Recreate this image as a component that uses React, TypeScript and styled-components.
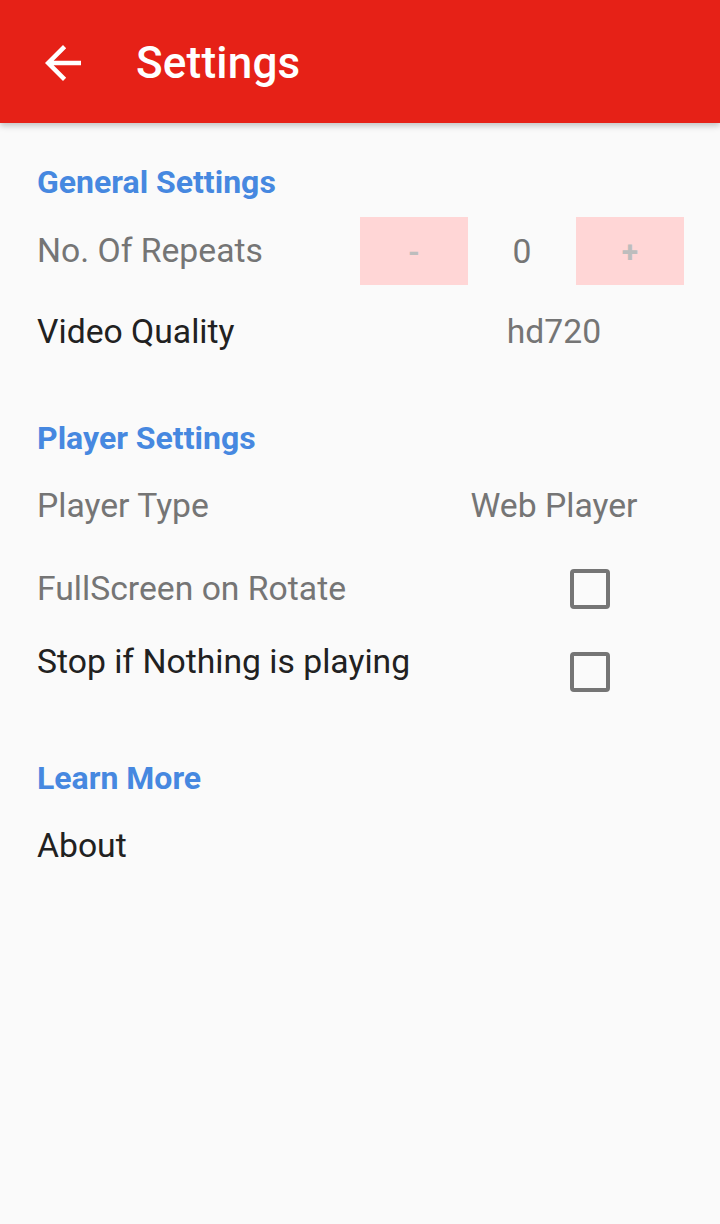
import React from "react";
import styled, { createGlobalStyle } from "styled-components";

const Global = createGlobalStyle`
  html, body { margin: 0; padding: 0; background: #fafafa; }
  body { font-family: Roboto, "Noto Sans", "Liberation Sans", sans-serif; }
  * { box-sizing: border-box; }
`;

const Page = styled.div`
  width: 720px;
  min-height: 1224px;
  background: #fafafa;
  display: flex;
  flex-direction: column;
`;

const AppBar = styled.header`
  height: 123px;
  background: #e62117;
  display: flex;
  align-items: center;
  padding-left: 36px;
  box-shadow: 0 3px 6px rgba(0, 0, 0, 0.22);
  position: relative;
  z-index: 1;
`;

const BackButton = styled.button`
  width: 54px;
  height: 54px;
  padding: 0;
  border: none;
  background: transparent;
  display: flex;
  align-items: center;
  justify-content: center;
  margin-top: 2px;
`;

const Title = styled.h1`
  margin: 3px 0 0 46px;
  color: #fff;
  font-size: 44px;
  font-weight: 500;
  letter-spacing: 0.2px;
`;

const Content = styled.main`
  display: flex;
  flex-direction: column;
  padding: 35px 36px 0 37px;
`;

const SectionTitle = styled.h2<{ $gap?: number }>`
  margin: ${(p) => p.$gap ?? 0}px 0 0 0;
  height: 48px;
  display: flex;
  align-items: center;
  color: #4688e0;
  font-size: 32px;
  font-weight: 700;
`;

const Row = styled.div<{ $h: number; $top?: boolean }>`
  height: ${(p) => p.$h}px;
  display: flex;
  align-items: ${(p) => (p.$top ? "flex-start" : "center")};
`;

const Label = styled.span<{ $dark?: boolean; $offset?: number }>`
  flex: 1;
  font-size: 33.7px;
  line-height: 40px;
  color: ${(p) => (p.$dark ? "#212121" : "#757575")};
  margin-top: ${(p) => p.$offset ?? 0}px;
`;

const Value = styled.span<{ $w: number }>`
  width: ${(p) => p.$w}px;
  text-align: center;
  font-size: 33.7px;
  line-height: 40px;
  color: #757575;
`;

const Stepper = styled.div`
  display: flex;
  align-items: center;
`;

const StepButton = styled.button`
  width: 108px;
  height: 68px;
  border: none;
  padding: 0;
  background: #ffd6d6;
  color: #bdbdbd;
  font-family: inherit;
  font-size: 30px;
  font-weight: 700;
  display: flex;
  align-items: center;
  justify-content: center;
`;

const Count = styled.span`
  width: 108px;
  text-align: center;
  font-size: 33.7px;
  color: #757575;
`;

const CheckCell = styled.div<{ $offset?: number }>`
  width: 188px;
  display: flex;
  justify-content: center;
  margin-top: ${(p) => p.$offset ?? 0}px;
`;

const Checkbox = styled.span`
  width: 40px;
  height: 40px;
  border: 4px solid #757575;
  border-radius: 4px;
  display: block;
`;

const ArrowBack = () => (
  <svg width="54" height="54" viewBox="0 0 24 24" fill="#fff">
    <path d="M20 11H7.83l5.59-5.59L12 4l-8 8 8 8 1.41-1.41L7.83 13H20v-2z" />
  </svg>
);

export default function App() {
  return (
    <Page>
      <Global />
      <AppBar>
        <BackButton aria-label="Back">
          <ArrowBack />
        </BackButton>
        <Title>Settings</Title>
      </AppBar>
      <Content>
        <SectionTitle>General Settings</SectionTitle>
        <Row $h={90}>
          <Label>No. Of Repeats</Label>
          <Stepper>
            <StepButton>-</StepButton>
            <Count>0</Count>
            <StepButton>+</StepButton>
          </Stepper>
        </Row>
        <Row $h={72}>
          <Label $dark>Video Quality</Label>
          <Value $w={260}>hd720</Value>
        </Row>

        <SectionTitle $gap={46}>Player Settings</SectionTitle>
        <Row $h={88}>
          <Label>Player Type</Label>
          <Value $w={260}>Web Player</Value>
        </Row>
        <Row $h={78}>
          <Label>FullScreen on Rotate</Label>
          <CheckCell>
            <Checkbox />
          </CheckCell>
        </Row>
        <Row $h={88} $top>
          <Label $dark $offset={14}>
            Stop if Nothing is playing
          </Label>
          <CheckCell $offset={24}>
            <Checkbox />
          </CheckCell>
        </Row>

        <SectionTitle $gap={38}>Learn More</SectionTitle>
        <Row $h={88}>
          <Label $dark>About</Label>
        </Row>
      </Content>
    </Page>
  );
}
